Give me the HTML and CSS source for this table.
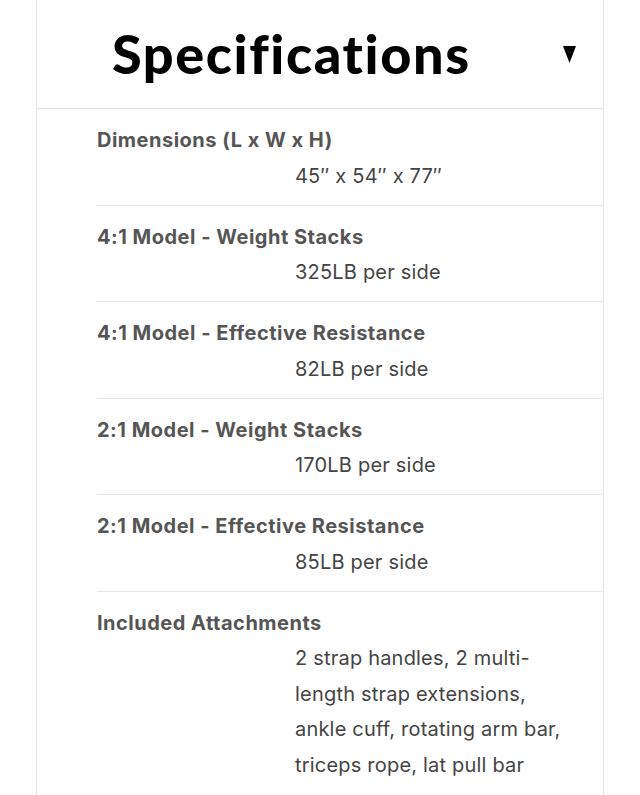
FILE: index.html
```html
<!DOCTYPE html>
<html>
<head>
<meta charset="utf-8">
<link rel="stylesheet" href="styles.css">
</head>
<body>
<div class="panel">
  <div class="header">
    <h2 class="title">Specifications</h2>
    <svg class="caret" width="13" height="17" viewBox="0 0 13 17"><polygon points="0,0 13,0 6.5,17" fill="#000"/></svg>
  </div>
  <div class="specs">
    <div class="row">
      <div class="label">Dimensions (L x W x H)</div>
      <div class="value">45″ x 54″ x 77″</div>
    </div>
    <div class="row">
      <div class="label">4:1 Model - Weight Stacks</div>
      <div class="value">325LB per side</div>
    </div>
    <div class="row">
      <div class="label">4:1 Model - Effective Resistance</div>
      <div class="value">82LB per side</div>
    </div>
    <div class="row">
      <div class="label">2:1 Model - Weight Stacks</div>
      <div class="value">170LB per side</div>
    </div>
    <div class="row">
      <div class="label">2:1 Model - Effective Resistance</div>
      <div class="value">85LB per side</div>
    </div>
    <div class="row last">
      <div class="label">Included Attachments</div>
      <div class="value">2 strap handles, 2 multi-length strap extensions, ankle cuff, rotating arm bar, triceps rope, lat pull bar</div>
    </div>
  </div>
</div>
</body>
</html>
```
FILE: styles.css
```css
html, body {
  margin: 0;
  padding: 0;
  background: #fff;
}
.panel {
  margin-left: 36px;
  width: 568px;
  box-sizing: border-box;
  border-left: 1px solid #e3e3e3;
  border-right: 1px solid #e3e3e3;
  min-height: 795px;
}
.header {
  display: flex;
  align-items: flex-start;
  height: 108px;
  border-bottom: 1px solid #e3e3e3;
  padding-left: 75px;
}
.title {
  margin: 0;
  padding-top: 27px;
  font-family: Lato, sans-serif;
  font-weight: 900;
  font-size: 54px;
  line-height: 54px;
  letter-spacing: 1.6px;
  color: #000;
}
.caret {
  margin-left: auto;
  margin-right: 27px;
  margin-top: 46px;
}
.specs {
  padding-left: 60px;
}
.row {
  padding: 14px 0 10.5px;
  border-bottom: 1px solid #e8e8e8;
  font-family: Inter, "Liberation Sans", sans-serif;
  font-size: 20px;
  line-height: 35.5px;
  letter-spacing: 0.2px;
}
.row.last {
  border-bottom: none;
}
.label {
  font-weight: 700;
  color: #555;
  letter-spacing: 0.5px;
}
.value {
  padding-left: 198px;
  width: 280px;
  color: #444;
}
```
